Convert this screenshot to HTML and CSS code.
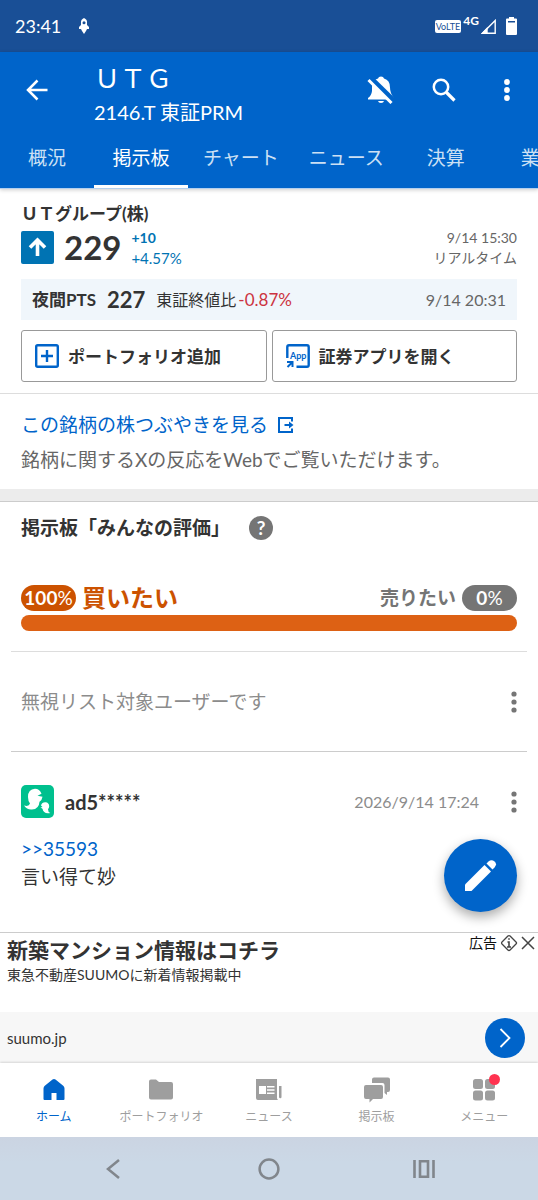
FILE: index.html
```html
<!DOCTYPE html>
<html lang="ja">
<head>
<meta charset="utf-8">
<meta name="viewport" content="width=device-width, initial-scale=1">
<title>ＵＴＧ 掲示板</title>
<link rel="stylesheet" href="styles.css">
</head>
<body>
<div class="status">
  <span class="clock">23:41</span>
  <svg width="10" height="16" viewBox="0 0 10 16" fill="#fff"><path d="M5 0Q8.500 1.500 8 5v2l2 2v2H8L7 13l-2 3-2-3-1-2H0V9l2-2V5Q1.500 1.500 5 0z"/><circle cx="5" cy="4.800" r="1.500" fill="#194f96"/></svg>
  <div class="signals">
    <span class="volte">VoLTE</span>
    <span class="net">4G</span>
    <svg class="signal" width="15" height="15" viewBox="0 0 15 15" fill="none" stroke="#fff" stroke-width="1.400"><path d="M14.200 1.500v12.800H1.500z"/><path d="M1.500 14.300 6 9.500v4.800z" fill="#fff"/></svg>
    <svg width="11" height="18" viewBox="0 0 11 18"><path d="M3 0h5v1.500h2q1 0 1 1V17q0 1-1 1H1q-1 0-1-1V2.500q0-1 1-1h2z" fill="#fff"/><path d="M2 4h7v1.500H2z" fill="#194f96"/></svg>
  </div>
</div>
<header class="header">
  <div class="titlebar">
    <button class="icon-btn" aria-label="戻る"><svg width="22" height="22" viewBox="0 0 22 22" fill="none" stroke="#fff" stroke-width="2.500"><path d="M21.500 11H2M11.500 1.500 2 11l9.500 9.500"/></svg></button>
    <div class="title"><h1>ＵＴＧ</h1><p>2146.T 東証PRM</p></div>
    <button class="icon-btn" aria-label="通知オフ"><svg width="28" height="28" viewBox="0 0 28 28"><path d="M1 23.500V22q3.500-2.500 4-7Q4 4 11 2.500 11.500.500 14 .500t3 2q6 1.500 6 9 0 6 4 10.500v1.500z" fill="#fff"/><path d="M11 25h6q-.500 2-3 2t-3-2z" fill="#fff"/><path d="M2.500 1.500 27.500 26" stroke="#0064ca" stroke-width="6"/><path d="m1.500 4 23 23" stroke="#fff" stroke-width="3"/></svg></button>
    <button class="icon-btn" aria-label="検索"><svg width="24" height="24" viewBox="0 0 24 24" fill="none" stroke="#fff"><circle cx="9" cy="9" r="7.200" stroke-width="2.500"/><path d="m14.500 14.500 8 8" stroke-width="3.200"/></svg></button>
    <button class="icon-btn" aria-label="メニュー"><svg width="6" height="22" viewBox="0 0 6 22" fill="#fff"><circle cx="3" cy="3" r="2.900"/><circle cx="3" cy="11" r="2.900"/><circle cx="3" cy="19" r="2.900"/></svg></button>
  </div>
  <nav class="tabs">
    <a href="#">概況</a><a href="#" class="active">掲示板</a><a href="#">チャート</a><a href="#">ニュース</a><a href="#">決算</a><a href="#">業績</a>
  </nav>
</header>
<main>
  <section class="quote">
    <h2>ＵＴグループ(株)</h2>
    <div class="price-row">
      <svg width="33" height="33" viewBox="0 0 33 33"><rect width="33" height="33" rx="2" fill="#0073b3"/><path d="M16.500 25V10M9 16.500 16.500 9l7.500 7.500" fill="none" stroke="#fff" stroke-width="3.600"/></svg>
      <strong class="price">229</strong>
      <div class="change"><b>+10</b><span>+4.57%</span></div>
      <div class="stamp"><span>9/14 15:30</span><span>リアルタイム</span></div>
    </div>
    <div class="pts">
      <b>夜間PTS</b><strong>227</strong><span>東証終値比</span><span class="down">-0.87%</span><time>9/14 20:31</time>
    </div>
    <div class="actions">
      <button><svg width="24" height="24" viewBox="0 0 24 24" fill="none" stroke="#0064ca" stroke-width="2.400"><rect x="1.200" y="1.200" width="21.600" height="21.600" rx="1.500"/><path d="M12 6v12M6 12h12"/></svg><span>ポートフォリオ追加</span></button>
      <button><svg width="24" height="24" viewBox="0 0 24 24"><path d="M1.300 14V3q0-1.700 1.700-1.700h18q1.700 0 1.700 1.700v18q0 1.700-1.700 1.700H10.500" fill="none" stroke="#0064ca" stroke-width="2.400"/><path d="M1 18h5.500v5M6.500 18l-5 5" fill="none" stroke="#0064ca" stroke-width="2"/><text x="4" y="15" class="app-text">App</text></svg><span>証券アプリを開く</span></button>
    </div>
  </section>
  <section class="tweets">
    <a href="#">この銘柄の株つぶやきを見る<svg width="16" height="16" viewBox="0 0 16 16" fill="none" stroke="#0064ca" stroke-width="2"><path d="M14 4.500V1H1v14h13v-3.500"/><path d="M6.500 8H13"/><path d="m11 4.500 4.500 3.500-4.500 3.500z" fill="#0064ca" stroke="none"/></svg></a>
    <p>銘柄に関するXの反応をWebでご覧いただけます。</p>
  </section>
  <section class="rating">
    <div class="rating-head"><h2>掲示板「みんなの評価」</h2><button class="help" aria-label="ヘルプ">?</button></div>
    <div class="votes">
      <span class="pill buy-pill"><b>100</b>%</span><b class="buy">買いたい</b>
      <b class="sell">売りたい</b><span class="pill sell-pill"><b>0</b>%</span>
    </div>
    <div class="bar"></div>
  </section>
  <article class="ignored">
    <p>無視リスト対象ユーザーです</p>
    <button class="more" aria-label="その他"><svg width="6" height="22" viewBox="0 0 6 22" fill="#757575"><circle cx="3" cy="3" r="2.600"/><circle cx="3" cy="11" r="2.600"/><circle cx="3" cy="19" r="2.600"/></svg></button>
  </article>
  <article class="post">
    <div class="post-head">
      <svg width="33" height="33" viewBox="0 0 33 33"><rect width="33" height="33" rx="5" fill="#00c08e"/><path d="M7 12Q7 4 14 3.700q4.500 0 6.500 5l-4 2 5 1q-.500 3.500-3 5Q18 24 11 24.500 6 25 3 20.500q5 1.500 6-2Q7 16 7 12z" fill="#fff"/><path d="M20 20.500q1-3.500 4.500-3.300 3.500.300 3.700 4 0 1.500-1.200 3 0 2.800 2.300 3.800-6.800 1.300-7.800-4.200l-2-1.300 2-.500z" fill="#fff"/></svg>
      <b>ad5*****</b><time>2026/9/14 17:24</time>
      <button class="more" aria-label="その他"><svg width="6" height="22" viewBox="0 0 6 22" fill="#757575"><circle cx="3" cy="3" r="2.600"/><circle cx="3" cy="11" r="2.600"/><circle cx="3" cy="19" r="2.600"/></svg></button>
    </div>
    <a href="#">&gt;&gt;35593</a>
    <p>言い得て妙</p>
  </article>
  <button class="fab" aria-label="投稿する"><svg width="33" height="33" viewBox="0 0 33 33" fill="#fff"><path d="M1 32v-6.500L20.500 6l6.500 6.500L7.500 32z"/><path d="m22.500 4.500 2-2Q27.500 0 30.500 2.500t0 6l-2 2z"/></svg></button>
</main>
<aside class="ad">
  <div class="ad-copy">
    <div><h3>新築マンション情報はコチラ</h3><p>東急不動産SUUMOに新着情報掲載中</p></div>
    <div class="ad-tools"><span>広告</span><svg width="18" height="18" viewBox="0 0 18 18" fill="none" stroke="#444" stroke-width="1.300"><rect x="3.300" y="3.300" width="11.400" height="11.400" rx="1.500" transform="rotate(45 9 9)"/><path d="M7.500 8H9v5M7 13h4M8.200 5h1.600" stroke-width="1.600"/></svg><button aria-label="閉じる"><svg width="14" height="14" viewBox="0 0 14 14" stroke="#444" stroke-width="1.500"><path d="m1 1 12 12M13 1 1 13"/></svg></button></div>
  </div>
  <div class="ad-foot"><span>suumo.jp</span><a href="#" class="ad-go" aria-label="開く"><svg width="12" height="20" viewBox="0 0 12 20" fill="none" stroke="#fff" stroke-width="1.800"><path d="m1.500 1 9 9-9 9"/></svg></a></div>
</aside>
<nav class="bottom">
  <a href="#" class="on"><svg width="28" height="28" viewBox="0 0 28 28" fill="currentColor"><path d="M3.500 12.500Q3.500 11 4.500 10L12.500 3.500q1.500-1 3 0L23.500 10q1 1 1 2.500V23q0 1-1 1h-7v-7h-5v7h-7q-1 0-1-1z"/></svg>ホーム</a>
  <a href="#"><svg width="28" height="28" viewBox="0 0 28 28" fill="currentColor"><path d="M4 3.500h5l3 2.500h12q2 0 2 2v13.500q0 2-2 2H4q-2 0-2-2v-16q0-2 2-2z"/></svg>ポートフォリオ</a>
  <a href="#"><svg width="28" height="28" viewBox="0 0 28 28" fill="currentColor"><path fill-rule="evenodd" d="M1 3h21v19q0 1 1 2H3q-2 0-2-2zm3 7v8h7v-8zm8 0v1.400h7.500V10zm0 3.300v1.400h7.500v-1.400zm0 3.300V18h7.500v-1.400z"/><path d="M24 10h2.500v11q0 1.200-1.200 1.200T24 21z"/></svg>ニュース</a>
  <a href="#"><svg width="28" height="28" viewBox="0 0 28 28" fill="currentColor"><path d="M11 1.500h14q2 0 2 2V14q0 2-2 2h-1v3l-2.500-2V9q0-2-2-2H9V3.500q0-2 2-2z"/><path d="M3 9h15q2 0 2 2v10q0 2-2 2h-8l-3.500 3.500V23H3q-2 0-2-2V11q0-2 2-2z"/></svg>掲示板</a>
  <a href="#" class="menu"><svg width="28" height="28" viewBox="0 0 28 28" fill="currentColor"><rect x="3" y="3" width="10" height="10" rx="2.500"/><rect x="15" y="3" width="10" height="10" rx="2.500"/><rect x="3" y="14.500" width="10" height="10" rx="2.500"/><rect x="15" y="14.500" width="10" height="10" rx="2.500"/></svg>メニュー<i class="badge"></i></a>
</nav>
<footer class="system">
  <button aria-label="戻る"><svg width="22" height="22" viewBox="0 0 22 22" fill="none" stroke="#81868c" stroke-width="2.500"><path d="M16 2 5 11l11 9"/></svg></button>
  <button aria-label="ホーム"><svg width="22" height="22" viewBox="0 0 22 22" fill="none" stroke="#81868c" stroke-width="2.500"><circle cx="11" cy="11" r="9.400"/></svg></button>
  <button aria-label="最近"><svg width="22" height="22" viewBox="0 0 22 22" fill="none" stroke="#81868c" stroke-width="2.600"><path d="M1.500 2v18M20.500 2v18"/><path d="M7 3.300h8v15.400H7z"/></svg></button>
</footer>
</body>
</html>
```

FILE: styles.css
```css
* { box-sizing: border-box; }
body {
  margin: 0;
  min-height: 100vh;
  display: flex;
  flex-direction: column;
  background: #fff;
  color: #333;
  font-family: Lato, "Noto Sans CJK JP", sans-serif;
  font-size: 19px;
  line-height: 28px;
  overflow-x: hidden;
}
h1, h2, h3, p { margin: 0; font-size: inherit; }
a { color: #0064ca; text-decoration: none; }
button { font: inherit; color: inherit; background: none; border: 0; padding: 0; }
svg { display: block; flex: none; }

.status {
  height: 52px;
  padding: 0 21px 0 15px;
  display: flex;
  align-items: center;
  gap: 18px;
  background: #194f96;
  color: #fff;
}
.clock { font-size: 18px; }
.signals { margin-left: auto; display: flex; align-items: center; gap: 2px; }
.volte {
  padding: 0 1px;
  border-radius: 2px;
  background: #fff;
  color: #194f96;
  font-size: 9px;
  line-height: 13px;
}
.net { padding-bottom: 10px; font-size: 12px; line-height: 16px; font-weight: bold; }
.signal { margin-right: 8px; }

.header { background: #0064ca; color: #fff; border-bottom: 1px solid #b3cfee; box-shadow: 0 1px 4px #0003; }
.titlebar { height: 76px; display: flex; align-items: center; padding-right: 12px; }
.icon-btn { width: 63px; display: flex; justify-content: center; }
.icon-btn:first-child { width: 74px; }
.icon-btn:last-child { width: 38px; margin-left: 13px; }
.title { flex: 1; padding: 12px 0 0 20px; }
h1 { font-size: 26px; font-weight: normal; line-height: 32px; font-family: "Noto Sans CJK JP", sans-serif; }
.title p { font-size: 20px; line-height: 38px; }
.tabs { display: flex; overflow: hidden; height: 60px; }
.tabs a {
  flex: none;
  min-width: 94px;
  padding: 0 15px;
  text-align: center;
  line-height: 59px;
  height: 60px;
  color: #cce0f4;
  border-bottom: 3px solid transparent;
}
.tabs .active { color: #fff; border-color: #fff; }

main { flex: 1; position: relative; }
.quote { padding: 12px 21px 11px; border-bottom: 1px solid #ddd; }
.quote h2 { font-size: 17px; line-height: 26px; }
.price-row { display: flex; align-items: center; margin-top: 4px; height: 33px; }
.price { margin-left: 10px; font-size: 33px; line-height: 33px; }
.change { margin-left: 10px; display: flex; flex-direction: column; font-size: 15px; line-height: 20px; color: #0073b3; }
.change b { font-size: 14px; }
.stamp { margin-left: auto; display: flex; flex-direction: column; text-align: right; font-size: 14px; line-height: 20px; color: #666; }
.pts { margin-top: 15px; height: 41px; padding: 0 11px; display: flex; align-items: center; background: #f0f6fb; font-size: 17px; }
.pts strong { margin: 0 11px; font-size: 22px; }
.pts span { font-size: 16px; }
.pts .down { margin-left: 2px; font-size: 17px; color: #cc3340; }
.pts time { margin-left: auto; font-size: 16px; color: #666; }
.actions { display: grid; grid-template-columns: 1fr 1fr; gap: 5px; margin-top: 10px; }
.actions button {
  height: 52px;
  padding: 0 13px;
  display: flex;
  align-items: center;
  gap: 9px;
  border: 1px solid #999;
  border-radius: 3px;
  font-size: 17px;
  font-weight: bold;
}
.actions span { padding-top: 2px; }
.app-text { font: bold 9px Lato, sans-serif; fill: #0064ca; }

.tweets { padding: 13px 21px 12px; color: #666; }
.tweets a { display: flex; align-items: center; gap: 10px; line-height: 35px; }
.tweets p { line-height: 35px; }

.rating { border-top: 12px solid #ececec; padding: 13px 21px 20px; box-shadow: inset 0 1px #ccc; }
.rating-head { display: flex; align-items: center; gap: 19px; }
.help { width: 24px; height: 24px; border-radius: 50%; background: #757575; color: #fff; font-weight: bold; line-height: 24px; text-align: center; }
.votes { display: flex; align-items: center; height: 26px; margin-top: 43px; }
.pill { width: 55px; height: 26px; border-radius: 13px; color: #fff; text-align: center; line-height: 26px; }
.buy-pill { background: #cc5200; }
.sell-pill { background: #757575; margin-left: 6px; }
.buy { margin-left: 6px; font-size: 24px; line-height: 30px; color: #cc5200; }
.sell { margin-left: auto; color: #757575; }
.bar { height: 16px; margin-top: 4px; border-radius: 8px; background: #dd6114; }

.ignored, .post { margin: 0 11px; padding: 0 10px; border-top: 1px solid #ddd; }
.ignored { height: 100px; display: flex; align-items: center; justify-content: space-between; color: #8c8c8c; }
.post { padding-top: 33px; border-color: #ccc; }
.more { width: 6px; }
.post-head { display: flex; align-items: center; }
.post-head b { margin-left: 11px; font-size: 20px; }
.post-head time { margin-left: auto; margin-right: 32px; font-size: 16px; color: #8c8c8c; }
.post > a { display: block; margin-top: 17px; }
.fab {
  position: absolute;
  right: 21px;
  bottom: 20px;
  width: 73px;
  height: 73px;
  border-radius: 50%;
  background: #0064ca;
  display: grid;
  place-items: center;
  box-shadow: 0 5px 12px #0005;
}

.ad { border-top: 1px solid #ccc; color: #333; }
.ad-copy { min-height: 79px; padding: 3px 3px 0 7px; display: flex; justify-content: space-between; }
h3 { font-size: 21px; line-height: 28px; }
.ad-copy p { font-size: 14px; line-height: 22px; }
.ad-tools { display: flex; align-items: center; gap: 3px; height: 14px; font-size: 14px; color: #111; }
.ad-foot { height: 51px; padding: 0 13px 0 7px; display: flex; align-items: center; justify-content: space-between; background: #f7f7f7; font-size: 15px; }
.ad-go { width: 40px; height: 40px; border-radius: 50%; background: #0064ca; display: grid; place-items: center; }

.bottom { display: grid; grid-template-columns: repeat(5, 1fr); height: 74px; box-shadow: 0 -1px 2px #0002; }
.bottom a { position: relative; display: flex; flex-direction: column; align-items: center; padding-top: 13px; gap: 3px; font-size: 12px; line-height: 20px; color: #9e9e9e; }
.bottom .on { color: #0064ca; }
.badge { position: absolute; top: 11px; left: calc(50% + 5px); width: 11px; height: 11px; border-radius: 50%; background: #ff3350; }

.system { height: 63px; padding: 0 36px; display: grid; grid-template-columns: repeat(3, 1fr); place-items: center; background: linear-gradient(#cbd4e2, #cbd8e6 40%); }
```
